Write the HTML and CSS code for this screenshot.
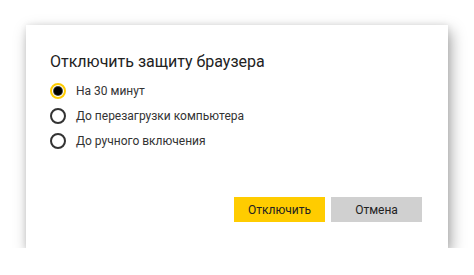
FILE: index.html
```html
<!DOCTYPE html>
<html>
<head>
  <meta charset="utf-8">
  <link rel="stylesheet" href="styles.css">
</head>
<body>
    <div class="dialog">
        <h2 class="title">Отключить защиту браузера</h2>
        <div class="options">
            <label class="option"><span class="radio checked"></span>На 30 минут</label>
            <label class="option"><span class="radio"></span>До перезагрузки компьютера</label>
            <label class="option"><span class="radio"></span>До ручного включения</label>
        </div>
        <div class="buttons">
            <button type="button" class="btn btn-yellow">Отключить</button>
            <button type="button" class="btn btn-gray">Отмена</button>
        </div>
    </div>
</body>
</html>
```

FILE: styles.css
```css
* {
    padding: 0px;
    margin: 0px;
    box-sizing: border-box;
}

body {
    background-color: #fff;
    font-family: Roboto, Arial, sans-serif;
    color: #222;
}

.dialog {
    width: 422px;
    height: 223px;
    margin: 25px 0 0 26px;
    background-color: #fff;
    padding: 25px 26px 26px 24px;
    display: flex;
    flex-direction: column;
    box-shadow: 3px 6px 14px rgba(0, 0, 0, 0.35), 0px 0px 6px rgba(0, 0, 0, 0.08);
}

.title {
    font-size: 16px;
    font-weight: normal;
    line-height: 24px;
    color: #222;
    margin-bottom: 9px;
}

.options {
    display: flex;
    flex-direction: column;
    gap: 9px;
}

.option {
    display: flex;
    align-items: center;
    font-size: 12px;
    line-height: 16px;
    color: #333;
}

.radio {
    width: 16px;
    height: 16px;
    border: 2px solid #333;
    border-radius: 50%;
    margin-right: 10px;
    display: flex;
    align-items: center;
    justify-content: center;
}

.radio.checked {
    border-color: #fc0;
}

.radio.checked::after {
    content: "";
    width: 8px;
    height: 8px;
    border-radius: 50%;
    background-color: #000;
    box-shadow: 0 0 0 1px #444;
}

.buttons {
    margin-top: auto;
    display: flex;
    justify-content: flex-end;
    gap: 6px;
}

.btn {
    width: 91px;
    height: 25px;
    border: none;
    font-family: inherit;
    font-size: 12px;
    color: #222;
}

.btn-yellow {
    background-color: #ffcc00;
}

.btn-gray {
    background-color: #d0d0d0;
}
```
